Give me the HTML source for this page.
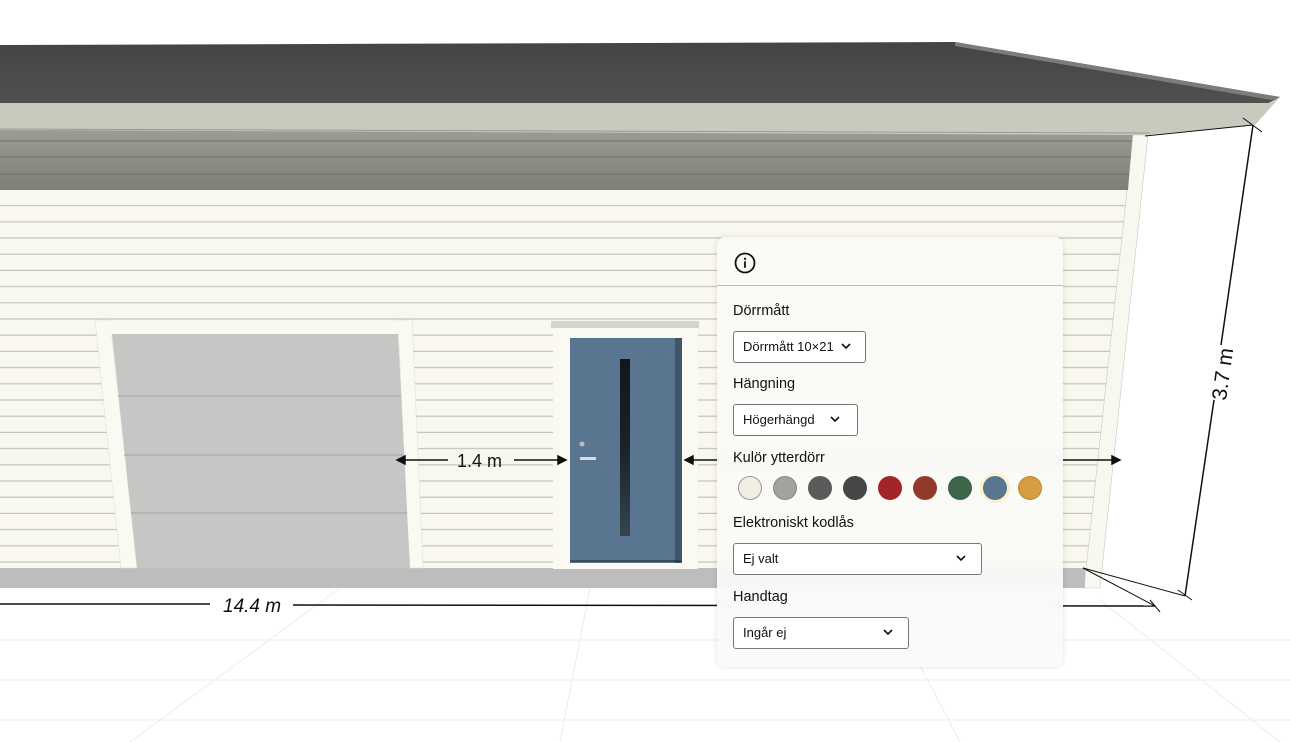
<!DOCTYPE html>
<html><head><meta charset="utf-8"><style>
html,body{margin:0;padding:0;width:1290px;height:742px;overflow:hidden;background:#fff;font-family:"Liberation Sans",sans-serif}
#panel{position:absolute;left:717px;top:237px;width:346px;height:430px;background:rgba(250,250,247,0.93);border-radius:8px;box-shadow:0 0 6px rgba(0,0,0,0.12);backdrop-filter:blur(6px);color:#111}
.lbl{position:absolute;left:16px;font-size:14.5px}
.sel{position:absolute;left:16px;height:32px;border:1px solid #777;border-radius:3px;background:#fff;font-size:13px;box-sizing:border-box;padding:0 0 0 9px;line-height:30px}
.sel svg{position:absolute;top:11px}
.dot{position:absolute;top:239px;width:24px;height:24px;border-radius:50%;box-sizing:border-box}
</style></head><body>
<svg width="1290" height="742" style="position:absolute;left:0;top:0">
<defs>
<pattern id="sid" width="40" height="16.2" patternUnits="userSpaceOnUse" y="190">
<rect width="40" height="16.2" fill="#f9f8ee"/><rect y="15" width="40" height="1.2" fill="#c4c4b8"/>
</pattern>
<linearGradient id="sof" x1="0" y1="0" x2="0" y2="1"><stop offset="0" stop-color="#9c9c94"/><stop offset="1" stop-color="#7f7f78"/></linearGradient>
<linearGradient id="roof" x1="0" y1="0" x2="0" y2="1"><stop offset="0" stop-color="#444"/><stop offset="1" stop-color="#515151"/></linearGradient>
<linearGradient id="win" x1="0" y1="0" x2="0" y2="1"><stop offset="0" stop-color="#121618"/><stop offset="0.5" stop-color="#1a2228"/><stop offset="1" stop-color="#34444f"/></linearGradient>
</defs>
<!-- ground grid -->
<g stroke="#ececec" stroke-width="1" fill="none">
<line x1="0" y1="640" x2="1290" y2="640"/><line x1="0" y1="680" x2="1290" y2="680"/><line x1="0" y1="720" x2="1290" y2="720"/>
<line x1="340" y1="588" x2="130" y2="742"/><line x1="590" y1="588" x2="560" y2="742"/><line x1="880" y1="588" x2="960" y2="742"/>
<line x1="1100" y1="600" x2="1280" y2="742"/>
</g>
<!-- wall -->
<polygon points="0,190 1128,190 1086,568 0,568" fill="url(#sid)"/>
<polygon points="1133,135 1148,135 1100,588 1084,588" fill="#f9f8f0" stroke="#c8c8c0" stroke-width="0.6"/>
<polygon points="0,130 1133,130 1128,190 0,190" fill="url(#sof)"/>
<g stroke="#6f6f69" stroke-width="1"><line x1="0" y1="141" x2="1132" y2="141"/><line x1="0" y1="157" x2="1131" y2="157"/><line x1="0" y1="174" x2="1129" y2="174"/></g>
<rect x="0" y="568" width="1085" height="20" fill="#bdbdbd"/>
<!-- roof -->
<polygon points="0,45 955,42 1280,97 1265,105 0,105" fill="url(#roof)"/>
<polygon points="955,42 1280,97 1272,100 955,46" fill="#7d7d78"/>
<polygon points="0,103 1270,103 1280,97 1255,125 1145,135 0,130" fill="#c9c9be"/>
<line x1="0" y1="129" x2="1150" y2="133" stroke="#9a9a92"/>
<!-- garage -->
<polygon points="95,320 110,320 137,568 121,568" fill="#fbfaf2" stroke="#ddd" stroke-width="0.5"/>
<polygon points="398,320 412,320 423,568 409,568" fill="#fbfaf2" stroke="#ddd" stroke-width="0.5"/>
<rect x="105" y="322" width="295" height="13" fill="#fbfaf2"/>
<polygon points="112,334 398,334 410,568 137,568" fill="#c6c6c4"/>
<g stroke="#a9a9a7" stroke-width="1.2"><line x1="118" y1="396" x2="401" y2="396"/><line x1="124" y1="455" x2="404" y2="455"/><line x1="131" y1="513" x2="407" y2="513"/></g>
<!-- door -->
<rect x="551" y="321" width="148" height="7" fill="#d4d4cc"/>
<rect x="553" y="328" width="145" height="241" fill="#fbfaf2"/>
<rect x="570" y="338" width="112" height="225" fill="#5a7590"/>
<rect x="675" y="338" width="7" height="225" fill="#3f5568"/>
<rect x="620" y="359" width="10" height="177" fill="url(#win)"/>
<circle cx="582" cy="444" r="2.5" fill="#bbb"/>
<rect x="580" y="457" width="16" height="3" fill="#ddd"/>
<line x1="570" y1="561" x2="681" y2="561" stroke="#222"/>
<!-- dimensions -->
<g stroke="#111" stroke-width="1.5" fill="#111">
<line x1="402" y1="460" x2="448" y2="460"/><line x1="514" y1="460" x2="561" y2="460"/>
<polygon points="397,460 405,456 405,464"/><polygon points="566,460 558,456 558,464"/>
<line x1="690" y1="460" x2="1115" y2="460"/><polygon points="685,460 693,456 693,464"/><polygon points="1120,460 1112,456 1112,464"/>
<line x1="0" y1="604" x2="210" y2="604"/><line x1="293" y1="605" x2="1155" y2="606"/>
<line x1="1253" y1="125" x2="1221" y2="345"/><line x1="1214" y1="400" x2="1185" y2="596"/>
</g>
<g stroke="#111" stroke-width="1" fill="none">
<line x1="1145" y1="136" x2="1253" y2="125"/><line x1="1243" y1="118" x2="1262" y2="132"/>
<line x1="1083" y1="568" x2="1185" y2="596"/><line x1="1083" y1="568" x2="1155" y2="606"/>
<line x1="1178" y1="590" x2="1192" y2="600"/><line x1="1150" y1="600" x2="1160" y2="612"/>
</g>
<text x="457" y="467" font-family="Liberation Sans" font-size="18" fill="#111">1.4 m</text>
<text x="223" y="612" font-family="Liberation Sans" font-size="19" font-style="italic" fill="#111">14.4 m</text>
<text transform="translate(1226,401) rotate(-82)" font-family="Liberation Sans" font-size="21" fill="#111">3.7 m</text>
</svg>
<div id="panel">
<svg style="position:absolute;left:17px;top:15px" width="22" height="22" viewBox="0 0 22 22"><circle cx="11" cy="11" r="9.5" fill="none" stroke="#111" stroke-width="1.8"/><circle cx="11" cy="6.8" r="1.2" fill="#111"/><rect x="10.1" y="9.3" width="1.8" height="6.5" fill="#111"/></svg>
<div style="position:absolute;left:0;right:0;top:48px;height:1px;background:#bbb"></div>
<div class="lbl" style="top:66px">Dörrmått</div>
<div class="sel" style="top:94px;width:133px">Dörrmått 10×21<svg style="left:107px" width="10" height="7" viewBox="0 0 10 7"><path d="M1 1l4 4 4-4" stroke="#111" stroke-width="1.6" fill="none"/></svg></div>
<div class="lbl" style="top:139px">Hängning</div>
<div class="sel" style="top:167px;width:125px">Högerhängd<svg style="left:96px" width="10" height="7" viewBox="0 0 10 7"><path d="M1 1l4 4 4-4" stroke="#111" stroke-width="1.6" fill="none"/></svg></div>
<div class="lbl" style="top:213px">Kulör ytterdörr</div>
<div class="dot" style="left:21px;background:#f0ede4;border:1px solid #999"></div>
<div class="dot" style="left:56px;background:#a3a29e;border:1px solid #888"></div>
<div class="dot" style="left:91px;background:#5b5b5a"></div>
<div class="dot" style="left:126px;background:#454646"></div>
<div class="dot" style="left:161px;background:#a3252a"></div>
<div class="dot" style="left:196px;background:#923a2c"></div>
<div class="dot" style="left:231px;background:#3e644a"></div>
<div class="dot" style="left:266px;background:#5a7590;box-shadow:0 0 0 3px #fbf1c9"></div>
<div class="dot" style="left:301px;background:#d89d41;border:1px solid #b88a3a"></div>
<div class="lbl" style="top:278px">Elektroniskt kodlås</div>
<div class="sel" style="top:306px;width:249px">Ej valt<svg style="left:222px" width="10" height="7" viewBox="0 0 10 7"><path d="M1 1l4 4 4-4" stroke="#111" stroke-width="1.6" fill="none"/></svg></div>
<div class="lbl" style="top:352px">Handtag</div>
<div class="sel" style="top:380px;width:176px">Ingår ej<svg style="left:149px" width="10" height="7" viewBox="0 0 10 7"><path d="M1 1l4 4 4-4" stroke="#111" stroke-width="1.6" fill="none"/></svg></div>
</div>
</body></html>
